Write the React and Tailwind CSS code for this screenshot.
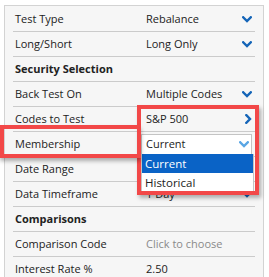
import React from 'react';

function ChevronDown({ className = '' }) {
  return (
    <svg className={className} width="10" height="7" viewBox="0 0 10 7" fill="none">
      <polyline points="1.2,1.3 5,5 8.8,1.3" stroke="currentColor" strokeWidth="2.4" strokeLinecap="square" />
    </svg>
  );
}

function ChevronRight({ className = '' }) {
  return (
    <svg className={className} width="7" height="10" viewBox="0 0 7 10" fill="none">
      <polyline points="1.3,1.2 5,5 1.3,8.8" stroke="currentColor" strokeWidth="2.4" strokeLinecap="square" />
    </svg>
  );
}

function Row({ label, value, bold, icon, muted, children }) {
  return (
    <div className="flex items-center h-[25px] border-b border-[#cbcbcb] pl-[2px] pr-[3px]">
      <div className={`w-[131px] shrink-0 ${bold ? 'font-bold' : ''}`}>{label}</div>
      {children ? (
        children
      ) : (
        <div className="flex flex-1 items-center justify-between">
          <span className={muted ? 'text-[#8a8a8a]' : ''}>{value}</span>
          {icon === 'down' && <ChevronDown className="text-[#1565b8]" />}
          {icon === 'right' && <ChevronRight className="text-[#1565b8]" />}
        </div>
      )}
    </div>
  );
}

export default function App() {
  const rows = [
    { label: 'Test Type', value: 'Rebalance', icon: 'down' },
    { label: 'Long/Short', value: 'Long Only', icon: 'down' },
    { label: 'Security Selection', bold: true },
    { label: 'Back Test On', value: 'Multiple Codes', icon: 'down' },
    { label: 'Codes to Test', value: 'S&P 500', icon: 'right' },
  ];
  const rest = [
    { label: 'Date Range', value: '', icon: 'down' },
    { label: 'Data Timeframe', value: '1 Day', icon: 'down' },
    { label: 'Comparisons', bold: true },
    { label: 'Comparison Code', value: 'Click to choose', muted: true },
    { label: 'Interest Rate %', value: '2.50' },
  ];

  return (
    <div className="relative w-[269px] h-[277px] overflow-hidden bg-white pt-[5px] pl-[4px] text-[11px] text-[#222] font-['Open_Sans',sans-serif]">
      <div className="w-[260px] border border-[#d3d3d3] bg-[#f6f6f6] px-[8px] pt-[1px]">
        {rows.map((r) => (
          <Row key={r.label} {...r} />
        ))}
        <Row label="Membership">
          <div className="flex flex-1 items-center justify-between h-[21px] -ml-[5px] pl-[4px] pr-[2px] bg-white border border-[#c4c4c4]">
            <span>Current</span>
            <ChevronDown className="text-[#5aa6e4]" />
          </div>
        </Row>
        {rest.map((r) => (
          <Row key={r.label} {...r} />
        ))}
      </div>

      {/* open dropdown list */}
      <div className="absolute left-[141px] top-[154px] w-[113px] bg-white border border-[#c4c4c4] border-t-0">
        <div className="h-[19px] flex items-center pl-[3px] bg-[#0a63c6] text-white text-[11.5px]">Current</div>
        <div className="h-[19px] flex items-center pl-[3px] text-[11.5px]">Historical</div>
      </div>

      {/* annotation boxes */}
      <div className="absolute left-[137px] top-[105px] w-[122px] h-[90px] border-4 border-[#f24848] shadow-[2px_3px_4px_rgba(0,0,0,0.3)]" />
      <div className="absolute left-0 top-[125px] w-[141px] h-[33px] border-4 border-r-0 border-[#f24848] shadow-[0_3px_4px_rgba(0,0,0,0.3)]" />
    </div>
  );
}
